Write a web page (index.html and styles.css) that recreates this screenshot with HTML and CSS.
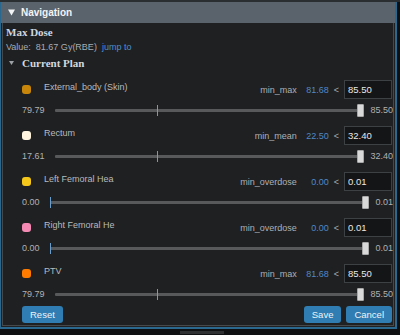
FILE: index.html
```html
<!DOCTYPE html>
<html>
<head>
<meta charset="utf-8">
<link rel="stylesheet" href="styles.css">
</head>
<body>
<div class="topbar"></div>
<div class="frame">
  <div class="header">
    <svg class="caret" width="7" height="7" viewBox="0 0 7 7"><path d="M0 0.5H7L3.5 6.5Z" fill="#f2f4f6"/></svg>
    <span>Navigation</span>
  </div>
  <div class="panel">
    <div class="intro">
      <div class="title">Max Dose</div>
      <div class="value">Value:&nbsp; 81.67 Gy(RBE)&nbsp; <span class="link">jump to</span></div>
      <div class="plan">
        <svg class="caret-s" width="5" height="4" viewBox="0 0 5 4"><path d="M0 0H5L2.5 4Z" fill="#9ea2a6"/></svg>
        <span>Current Plan</span>
      </div>
    </div>
    <div class="rows">
      <div class="row">
        <div class="row-top">
          <span class="dot c1"></span>
          <span class="name">External_body (Skin)</span>
          <span class="obj">min_max</span>
          <span class="cur">81.68</span>
          <span class="lt">&lt;</span>
          <input class="num" type="text" value="85.50">
        </div>
        <div class="row-slider">
          <span class="lim">79.79</span>
          <div class="track"><span class="tick" style="left:33%"></span><span class="thumb"></span></div>
          <span class="lim">85.50</span>
        </div>
      </div>
      <div class="row">
        <div class="row-top">
          <span class="dot c2"></span>
          <span class="name">Rectum</span>
          <span class="obj">min_mean</span>
          <span class="cur">22.50</span>
          <span class="lt">&lt;</span>
          <input class="num" type="text" value="32.40">
        </div>
        <div class="row-slider">
          <span class="lim">17.61</span>
          <div class="track"><span class="tick" style="left:33%"></span><span class="thumb"></span></div>
          <span class="lim">32.40</span>
        </div>
      </div>
      <div class="row">
        <div class="row-top">
          <span class="dot c3"></span>
          <span class="name">Left Femoral Hea</span>
          <span class="obj">min_overdose</span>
          <span class="cur">0.00</span>
          <span class="lt">&lt;</span>
          <input class="num" type="text" value="0.01">
        </div>
        <div class="row-slider">
          <span class="lim">0.00</span>
          <div class="track"><span class="tick" style="left:0%"></span><span class="thumb"></span></div>
          <span class="lim">0.01</span>
        </div>
      </div>
      <div class="row">
        <div class="row-top">
          <span class="dot c4"></span>
          <span class="name">Right Femoral He</span>
          <span class="obj">min_overdose</span>
          <span class="cur">0.00</span>
          <span class="lt">&lt;</span>
          <input class="num" type="text" value="0.01">
        </div>
        <div class="row-slider">
          <span class="lim">0.00</span>
          <div class="track"><span class="tick" style="left:0%"></span><span class="thumb"></span></div>
          <span class="lim">0.01</span>
        </div>
      </div>
      <div class="row">
        <div class="row-top">
          <span class="dot c5"></span>
          <span class="name">PTV</span>
          <span class="obj">min_max</span>
          <span class="cur">81.68</span>
          <span class="lt">&lt;</span>
          <input class="num" type="text" value="85.50">
        </div>
        <div class="row-slider">
          <span class="lim">79.79</span>
          <div class="track"><span class="tick" style="left:33%"></span><span class="thumb"></span></div>
          <span class="lim">85.50</span>
        </div>
      </div>
    </div>
    <div class="buttons">
      <button class="btn">Reset</button>
      <div class="right">
        <button class="btn">Save</button>
        <button class="btn">Cancel</button>
      </div>
    </div>
  </div>
</div>
<div class="tab"></div>
</body>
</html>
```

FILE: styles.css
```css
html, body {
  margin: 0;
  padding: 0;
}
body {
  background: #0f1011;
  width: 400px;
  height: 335px;
  overflow: hidden;
  font-family: "Liberation Sans", Arial, sans-serif;
  font-size: 9px;
  color: #b6b8ba;
}
.topbar {
  height: 2px;
  background: #2b2e31;
}
.frame {
  width: 394px;
  border-style: solid;
  border-color: #2a6890;
  border-width: 0 2px 2px 1px;
  background: #1f2022;
}
.header {
  height: 21px;
  background: #5a636b;
  display: flex;
  align-items: center;
  padding-left: 7px;
  gap: 6px;
  color: #f2f4f6;
  font-weight: bold;
  font-size: 10px;
}
.caret {
  display: block;
}
.panel {
  margin: 0 1px 1px 1px;
  border: 1px solid #46494c;
  border-top: none;
  padding: 1px 0 2px 0;
}
.intro {
  padding-left: 3px;
}
.title {
  font-family: "Liberation Serif", "Times New Roman", serif;
  font-weight: bold;
  font-size: 11px;
  line-height: 16px;
  color: #cdd6e0;
}
.value {
  line-height: 15px;
  color: #a9acb0;
}
.link {
  color: #4c8ed0;
}
.plan {
  display: flex;
  align-items: center;
  height: 16px;
  padding-left: 3px;
  gap: 8px;
  font-family: "Liberation Serif", "Times New Roman", serif;
  font-weight: bold;
  font-size: 11px;
  color: #d2d8de;
}
.caret-s {
  display: block;
}
.rows {
  margin-top: 9px;
  padding: 0 0 0 19px;
  display: flex;
  flex-direction: column;
  gap: 9px;
}
.row-top {
  display: flex;
  align-items: center;
  height: 19px;
}
.dot {
  width: 9px;
  height: 9px;
  border-radius: 3px;
  flex: none;
}
.c1 { background: #c8860a; }
.c2 { background: #fff4e0; }
.c3 { background: #f5c71a; }
.c4 { background: #f58ab4; }
.c5 { background: #ff7b00; }
.name {
  margin-left: 13px;
  align-self: flex-start;
  line-height: 14px;
  color: #b8babc;
  flex: 1;
}
.obj {
  color: #aeb0b2;
  margin-right: 8px;
}
.cur {
  min-width: 24px;
  text-align: right;
  color: #4f88c6;
}
.lt {
  margin: 0 5px;
  color: #a8aaac;
}
.num {
  width: 48px;
  height: 19px;
  box-sizing: border-box;
  margin: 0 1px 0 0;
  padding: 0 0 0 3px;
  border: 1px solid #3e4144;
  background: #141517;
  color: #e8e8e8;
  font-family: "Liberation Sans", Arial, sans-serif;
  font-size: 9.5px;
  outline: none;
}
.row-slider {
  display: flex;
  align-items: center;
  height: 14px;
  margin-top: 4px;
}
.lim {
  color: #b0b2b4;
}
.track {
  position: relative;
  flex: 1;
  height: 3px;
  margin: 0 6px 0 10px;
  background: #58595b;
  border-radius: 1px;
}
.tick {
  position: absolute;
  top: -4px;
  width: 1.5px;
  height: 11px;
  background: #6a9ccc;
}
.thumb {
  position: absolute;
  right: 0;
  top: -5px;
  width: 7px;
  height: 13px;
  box-sizing: border-box;
  background: #d9d9d9;
  border: 1px solid #a8a8a8;
  border-radius: 1px;
}
.buttons {
  display: flex;
  justify-content: space-between;
  padding: 0 1px 0 19px;
  margin-top: 5px;
}
.right {
  display: flex;
  gap: 5px;
}
.btn {
  height: 17px;
  padding: 0 8px;
  border: none;
  border-radius: 3px;
  background: #2f7db2;
  color: #eef3f8;
  font-family: "Liberation Sans", Arial, sans-serif;
  font-size: 9.5px;
  line-height: 17px;
}
.tab {
  margin: 2px 0 0 180px;
  width: 44px;
  height: 3px;
  background: #2e3032;
}
```
